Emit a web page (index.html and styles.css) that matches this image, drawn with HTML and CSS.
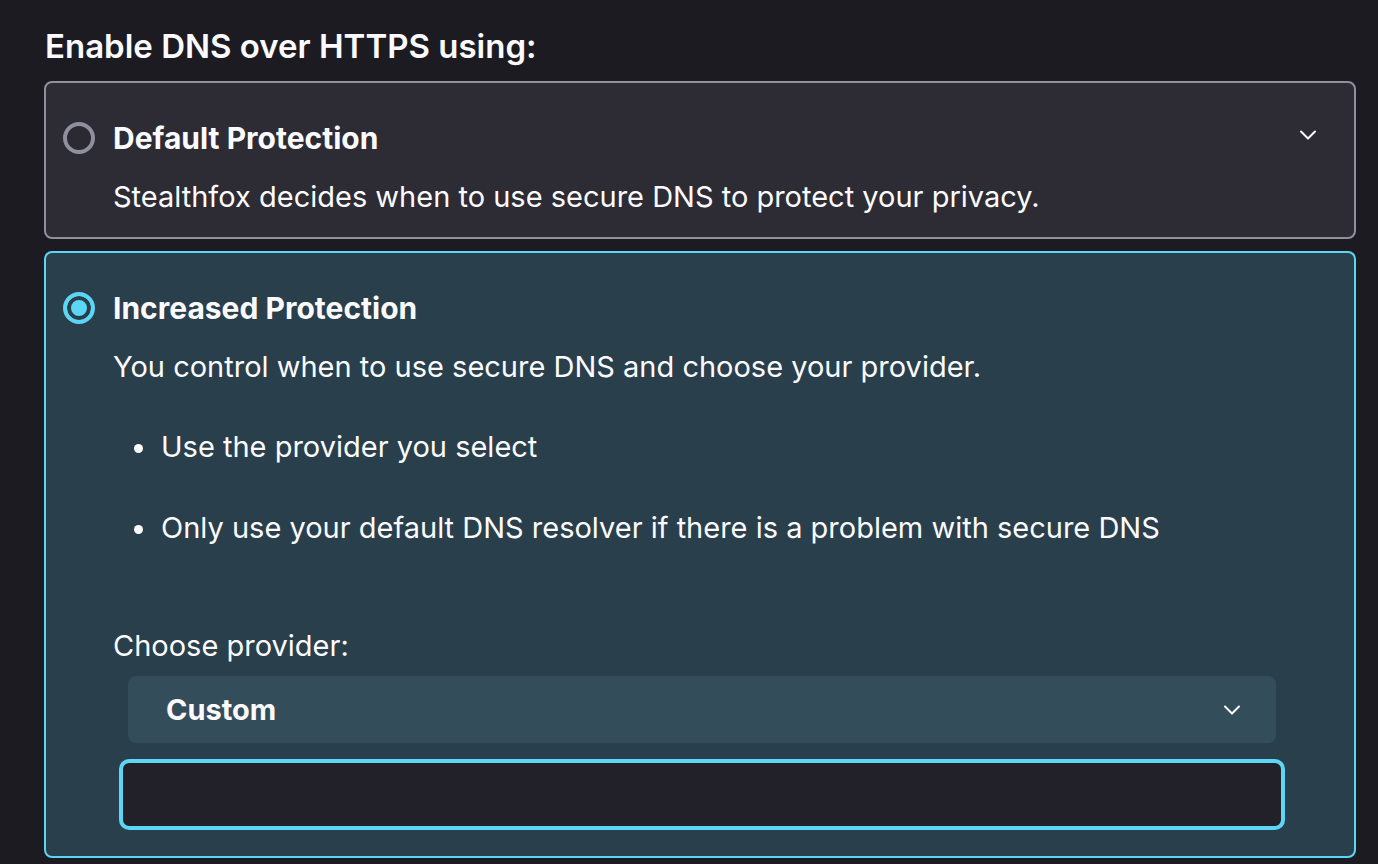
FILE: index.html
```html
<!DOCTYPE html>
<html lang="en">
<head>
<meta charset="utf-8">
<title>DNS over HTTPS</title>
<link rel="stylesheet" href="styles.css">
</head>
<body>
<main class="page">
  <h2 class="heading">Enable DNS over HTTPS using:</h2>

  <section class="card">
    <div class="radio"></div>
    <div class="card-head">
      <span class="title">Default Protection</span>
      <svg class="chev" width="16" height="10" viewBox="0 0 16 10"><path d="M1 1.5 L8 8.5 L15 1.5" fill="none" stroke="#fbfbfe" stroke-width="2" stroke-linecap="round" stroke-linejoin="round"/></svg>
    </div>
    <p class="desc">Stealthfox decides when to use secure DNS to protect your privacy.</p>
  </section>

  <section class="card selected">
    <div class="radio checked"></div>
    <div class="card-head">
      <span class="title">Increased Protection</span>
    </div>
    <p class="desc">You control when to use secure DNS and choose your provider.</p>
    <ul class="bullets">
      <li>Use the provider you select</li>
      <li>Only use your default DNS resolver if there is a problem with secure DNS</li>
    </ul>
    <p class="label">Choose provider:</p>
    <div class="select">
      <span>Custom</span>
      <svg class="chev" width="16" height="10" viewBox="0 0 16 10"><path d="M1 1.5 L8 8.5 L15 1.5" fill="none" stroke="#fbfbfe" stroke-width="2" stroke-linecap="round" stroke-linejoin="round"/></svg>
    </div>
    <div class="input"></div>
  </section>
</main>
</body>
</html>
```

FILE: styles.css
```css
html, body {
  margin: 0;
  padding: 0;
  background: #1c1b22;
  color: #fbfbfe;
  font-family: Inter, "Noto Sans", sans-serif;
}

.page {
  padding: 26px 22px 0 44px;
  display: flex;
  flex-direction: column;
  gap: 12px;
}

.heading {
  margin: 0 0 3px 1px;
  font-size: 33px;
  font-weight: 600;
  line-height: 40px;
}

.card {
  border: 2px solid #8f8f9d;
  border-radius: 8px;
  background: #2d2c34;
  padding: 37px 38px 22px 17px;
  display: grid;
  grid-template-columns: 32px 1fr;
  column-gap: 18px;
  align-items: start;
}

.card.selected {
  border-color: #5cd6f5;
  background: #2a3f4c;
  padding-bottom: 26px;
}

.radio {
  grid-column: 1;
  grid-row: 1;
  width: 32px;
  height: 32px;
  box-sizing: border-box;
  border-radius: 50%;
  border: 4px solid #8f8f9d;
  background: #2b2a33;
  margin-top: 2px;
}

.radio.checked {
  border-color: #5cd6f5;
  background: #5cd6f5;
  box-shadow: inset 0 0 0 4px #2a3f4c;
}

.card-head {
  grid-column: 2;
  display: flex;
  align-items: flex-start;
  justify-content: space-between;
}

.title {
  font-size: 30px;
  font-weight: 700;
  line-height: 36px;
}

.card-head .chev {
  margin-top: 10px;
}

.desc, .bullets, .label, .select, .input {
  grid-column: 2;
}

.desc {
  margin: 23px 0 0;
  font-size: 29px;
  line-height: 36px;
}

.bullets {
  list-style: none;
  margin: 44px 0 0;
  padding: 0 0 0 48px;
  display: flex;
  flex-direction: column;
  gap: 45px;
}

.bullets li {
  font-size: 29px;
  line-height: 36px;
  position: relative;
}

.bullets li::before {
  content: "";
  position: absolute;
  left: -27px;
  top: 15px;
  width: 9px;
  height: 9px;
  border-radius: 50%;
  background: #fbfbfe;
}

.label {
  margin: 82px 0 0;
  font-size: 29px;
  line-height: 36px;
}

.select {
  margin: 12px 40px 0 15px;
  height: 67px;
  border-radius: 8px;
  background: #344d5a;
  display: flex;
  align-items: center;
  justify-content: space-between;
  padding: 0 36px 0 38px;
  font-size: 29px;
  font-weight: 700;
}

.input {
  margin: 16px 31px 0 6px;
  height: 71px;
  box-sizing: border-box;
  border: 4px solid #5cd6f5;
  border-radius: 10px;
  background: #222029;
}
```
